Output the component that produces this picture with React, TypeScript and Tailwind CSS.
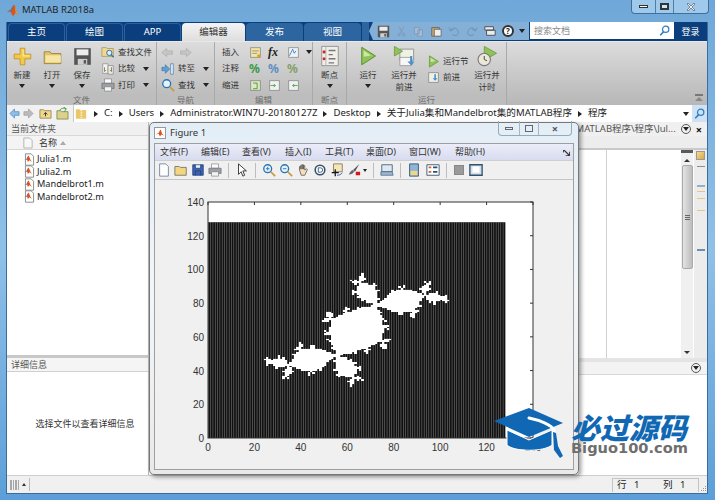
import { useMemo, type ReactNode } from 'react';

type IconProps = { className?: string };

const Svg = ({ children, className = 'w-4 h-4' }: { children: ReactNode; className?: string }) => (
  <svg viewBox="0 0 16 16" className={`${className} shrink-0`}>{children}</svg>
);

const Caret = () => <span className="inline-block w-0 h-0 border-x-[3.5px] border-x-transparent border-t-[4px] border-t-[#222]" />;
const Crumb = () => <span className="inline-block w-0 h-0 border-y-[3px] border-y-transparent border-l-[4px] border-l-[#222] mx-[6px]" />;

const MatlabLogo = ({ className }: IconProps) => (
  <Svg className={className}>
    <path d="M1 10l4-2 3-5 2-1 2 8 3 4-4-3-3 4-3-5z" fill="#d9541e" />
    <path d="M1 10l4-2 3-5 -1 6-3 0z" fill="#3f7fb5" />
    <path d="M10 2l2 8 3 4-4-3z" fill="#f0a020" />
  </Svg>
);

const MFile = () => (
  <Svg className="w-[13px] h-[13px]">
    <path d="M3 1h7l3 3v11H3z" fill="#fff" stroke="#777" />
    <path d="M1 9l3-1 2-4 1-1 2 5 2 3-3-2-2 2-1-3z" fill="#d9541e" />
    <path d="M1 9l3-1 2-4-1 4z" fill="#2f6fa8" />
  </Svg>
);

const Plus = () => (
  <Svg className="w-[19px] h-[19px]">
    <path d="M6 1h4v5h5v4h-5v5H6v-5H1V6h5z" fill="#f3c846" stroke="#b98a1c" strokeWidth=".6" />
    <path d="M7 2h2v5h5v1H8V2z" fill="#fbe89a" />
  </Svg>
);
const Folder = () => (
  <Svg className="w-[19px] h-[19px]">
    <path d="M1 4h5l1 1.5h8V14H1z" fill="#e2c468" stroke="#8a7130" strokeWidth=".6" />
    <path d="M2 7h13v6H2z" fill="#f5e6a6" />
  </Svg>
);
const Floppy = ({ className = 'w-[19px] h-[19px]' }: IconProps) => (
  <Svg className={className}>
    <path d="M1 1h14v14H1z" fill="#555" />
    <path d="M3 2h10v5H3z" fill="#ededed" />
    <path d="M4 10h8v5H4z" fill="#cfcfcf" />
    <path d="M9 11h2v3H9z" fill="#555" />
  </Svg>
);
const FindFile = () => (
  <Svg className="w-[14px] h-[14px]">
    <path d="M1 3h5l1 1h7v9H1z" fill="#f0d98f" stroke="#9a8240" strokeWidth=".7" />
    <circle cx="9.5" cy="9" r="3" fill="#dff0fb" stroke="#2a6fa8" strokeWidth="1.1" />
    <path d="M11.5 11l3 3" stroke="#2a6fa8" strokeWidth="1.5" />
  </Svg>
);
const Compare = () => (
  <Svg className="w-[14px] h-[14px]">
    <path d="M2 2h6v11H2z" fill="#f4f4f4" stroke="#888" strokeWidth=".8" />
    <path d="M8 4h6v10H8z" fill="#e8e8e8" stroke="#888" strokeWidth=".8" />
    <path d="M4 6v5l2-2M12 6v5l-2-2" stroke="#8a7a40" fill="none" />
  </Svg>
);
const Printer = ({ className = 'w-[14px] h-[14px]' }: IconProps) => (
  <Svg className={className}>
    <path d="M4 1h8v5H4z" fill="#fafafa" stroke="#777" strokeWidth=".7" />
    <path d="M1 6h14v6H1z" fill="#9aa0a6" stroke="#666" strokeWidth=".7" />
    <path d="M4 10h8v5H4z" fill="#f4f4f4" stroke="#777" strokeWidth=".7" />
  </Svg>
);
const GreyArrow = ({ flip }: { flip?: boolean }) => (
  <Svg className={`w-[13px] h-[13px] ${flip ? '-scale-x-100' : ''}`}>
    <path d="M1 8l6-5v3h7v4H7v3z" fill="#c6c6c6" stroke="#a5a5a5" strokeWidth=".7" />
  </Svg>
);
const GoTo = () => (
  <Svg className="w-[14px] h-[14px]">
    <path d="M1 8l5-5v3h4v4H6v3z" transform="rotate(180 5.5 8)" fill="#5f9fd6" stroke="#2d6da5" strokeWidth=".6" />
    <path d="M11 2h3v12h-3z" fill="#e8eef4" stroke="#2d6da5" strokeWidth=".7" />
  </Svg>
);
const Magnifier = ({ className = 'w-[14px] h-[14px]', mark }: IconProps & { mark?: string }) => (
  <Svg className={className}>
    <circle cx="6.5" cy="6.5" r="4.5" fill="#e3f1fb" stroke="#2a73ae" strokeWidth="1.5" />
    {mark && <path d={mark} stroke="#2a73ae" />}
    <path d="M10 10l5 5" stroke="#c99a3c" strokeWidth="2" />
  </Svg>
);
const Page = ({ children, tint = '#f1f1f1' }: { children?: ReactNode; tint?: string }) => (
  <Svg className="w-[13px] h-[13px]">
    <path d="M2 2h12v12H2z" fill={tint} stroke="#777" strokeWidth=".8" />
    {children}
  </Svg>
);
const Breakpoint = () => (
  <Svg className="w-[22px] h-[22px]">
    <path d="M2 1h12v14H2z" fill="#f1efea" stroke="#888" strokeWidth=".6" />
    <path d="M5 1v14" stroke="#aaa" strokeWidth=".6" />
    <circle cx="3.7" cy="5" r="1.1" fill="#d12a20" />
    <circle cx="3.7" cy="10" r="1.1" fill="#d12a20" />
    <path d="M7 4h5M7 7h3M7 10h5M7 13h4" stroke="#777" />
  </Svg>
);
const Play = ({ className = 'w-[20px] h-[20px]' }: IconProps) => (
  <Svg className={className}>
    <path d="M3 1l11 7-11 7z" fill="#8fc35a" stroke="#5f8f2c" strokeWidth=".8" />
    <path d="M4.5 3.5l6 4-6 1z" fill="#cde6a6" />
  </Svg>
);
const PlayAdvance = () => (
  <Svg className="w-[22px] h-[22px]">
    <path d="M5 3h10v8H5z" fill="#eef2e5" stroke="#777" strokeWidth=".5" />
    <path d="M1 1l6 3.5L1 8z" fill="#8fc35a" stroke="#5f8f2c" strokeWidth=".5" />
    <path d="M5 9h8v6H5z" fill="#f7f7f7" stroke="#888" strokeWidth=".5" />
    <path d="M12.5 8v4H10.5l3 3 2-3h-1.500V8z" fill="#4d8fcb" />
  </Svg>
);
const PlayTimer = () => (
  <Svg className="w-[22px] h-[22px]">
    <path d="M6 1l9 5-9 5z" fill="#8fc35a" stroke="#5f8f2c" strokeWidth=".5" />
    <circle cx="6" cy="10.500" r="4.500" fill="#ece8d8" stroke="#777" strokeWidth=".8" />
    <path d="M6 8v2.500l2 1" stroke="#444" fill="none" strokeWidth=".7" />
  </Svg>
);

const Big = ({ icon, label, arrow, className = '' }: { icon: ReactNode; label: ReactNode; arrow?: boolean; className?: string }) => (
  <div className={`flex flex-col items-center shrink-0 ${className}`}>
    <div className="h-[24px] flex items-center justify-center">{icon}</div>
    <div className="mt-[1px] text-center leading-[12px] text-[#333] whitespace-nowrap">{label}</div>
    {arrow && <div className="mt-[3px] leading-none flex"><Caret /></div>}
  </div>
);

const Small = ({ icon, label, arrow }: { icon: ReactNode; label: string; arrow?: boolean }) => (
  <div className="flex items-center h-[16.500px] gap-[3px] text-[#333] whitespace-nowrap">
    {icon}
    <span>{label}</span>
    {arrow && <span className="ml-[5px] flex"><Caret /></span>}
  </div>
);

const Section = ({ label, width, children }: { label: string; width: string; children: ReactNode }) => (
  <div className={`${width} shrink-0 flex flex-col border-r border-[#a9a9a9]`}>
    <div className="flex-1 flex pt-[2px] min-h-0">{children}</div>
    <div className="h-[11px] bg-[#bdbdbd] text-center text-[8.500px] leading-[11px] text-[#6d6d6d]">{label}</div>
  </div>
);

const Ribbon = () => (
  <div className="h-[64px] flex text-[8.500px] bg-gradient-to-b from-[#dcdcdc] to-[#b7b7b7] border-t border-[#e9e9e9]">
    <Section label="文件" width="w-[150px]">
      <Big className="w-[30px]" icon={<Plus />} label="新建" arrow />
      <Big className="w-[30px]" icon={<Folder />} label="打开" arrow />
      <Big className="w-[30px]" icon={<Floppy />} label="保存" arrow />
      <div className="flex flex-col ml-[4px]">
        <Small icon={<FindFile />} label="查找文件" />
        <Small icon={<Compare />} label="比较" arrow />
        <Small icon={<Printer />} label="打印" arrow />
      </div>
    </Section>
    <Section label="导航" width="w-[58px]">
      <div className="flex flex-col pl-[4px]">
        <div className="flex h-[16.500px] gap-[5px] items-center"><GreyArrow /><GreyArrow flip /></div>
        <Small icon={<GoTo />} label="转至" arrow />
        <Small icon={<Magnifier />} label="查找" arrow />
      </div>
    </Section>
    <Section label="编辑" width="w-[98px]">
      <div className="grid grid-cols-[27px_19px_19px_19px_10px] auto-rows-[16.500px] items-center pl-[7px]">
        <span className="text-[#333]">插入</span>
        <Page tint="#f5e4a4"><path d="M4 6h8M4 9h6" stroke="#887" /><circle cx="12" cy="12" r="2" fill="#e0a020" /></Page>
        <span className="font-['Liberation_Serif',serif] italic font-bold text-[12px] leading-none text-[#222]">fx</span>
        <Page tint="#eef3f8"><path d="M3 12l4-8 2 5 2-3" stroke="#3a74b0" fill="none" /></Page>
        <span className="flex"><Caret /></span>
        <span className="text-[#333]">注释</span>
        <span className="text-[12px] leading-none font-bold text-[#3c9a4a]">%</span>
        <span className="text-[12px] leading-none font-bold text-[#5f8fc0]">%</span>
        <span className="text-[12px] leading-none font-bold text-[#86a06a]">%</span>
        <span />
        <span className="text-[#333]">缩进</span>
        <Page tint="#dbe9c0"><path d="M5 5h5v7H5" stroke="#3c8a3a" fill="none" /></Page>
        <Page><path d="M3 8h6M7 6l2 2-2 2" stroke="#3c9a3a" fill="none" /></Page>
        <Page><path d="M13 8H7M9 6L7 8l2 2" stroke="#3c9a3a" fill="none" /></Page>
      </div>
    </Section>
    <Section label="断点" width="w-[34px]">
      <Big className="w-full" icon={<Breakpoint />} label="断点" arrow />
    </Section>
    <Section label="运行" width="w-[160px]">
      <Big className="w-[42px]" icon={<Play />} label="运行" arrow />
      <Big className="w-[30px]" icon={<PlayAdvance />} label={<>运行并<br />前进</>} />
      <div className="flex flex-col ml-[8px] pt-[9px] w-[48px]">
        <Small icon={<Play className="w-[13px] h-[13px]" />} label="运行节" />
        <Small icon={<Page tint="#eef0e6"><path d="M9 4v5H7l3 3 3-3h-2V4z" fill="#4d8fcb" /></Page>} label="前进" />
      </div>
      <Big className="w-[24px]" icon={<PlayTimer />} label={<>运行并<br />计时</>} />
    </Section>
    <div className="flex-1 flex flex-col items-end justify-end pr-[4px] pb-[4px]">
      <div className="w-[8px] border-t-2 border-[#777] mb-[1px]" />
      <div className="w-0 h-0 border-x-[4px] border-x-transparent border-b-[4px] border-b-[#888]" />
    </div>
  </div>
);

const Tab = ({ label, active }: { label: string; active?: boolean }) => (
  <div
    className={`rounded-t-[4px] flex items-center justify-center text-[9.500px] h-full ${active
      ? 'w-[63px] bg-gradient-to-b from-[#f4f4f4] to-[#dedede] text-[#333]'
      : 'w-[57px] mr-[1px] bg-[#0b3e7c] border-t border-x border-[#2c5f9c] text-white'}`}
  >
    {label}
  </div>
);

const DimTab = ({ label }: { label: string }) => (
  <div className="w-[57px] mr-[1px] h-full rounded-t-[4px] flex items-center justify-center text-[9.500px] text-white bg-[#2c659f]">{label}</div>
);

const SearchGlass = () => (
  <svg viewBox="0 0 14 14" className="w-[11px] h-[11px]"><circle cx="8.500" cy="5.500" r="4" fill="none" stroke="#2f7fc1" strokeWidth="1.600" /><path d="M6 8.500L1.500 13" stroke="#2f7fc1" strokeWidth="2" /></svg>
);

const TabStrip = () => (
  <div className="h-[19px] flex bg-[#0b3e7c] pl-[1px] pt-[1px] text-white">
    <Tab label="主页" />
    <Tab label="绘图" />
    <Tab label="APP" />
    <Tab label="编辑器" active />
    <div className="w-[1px]" />
    <DimTab label="发布" />
    <DimTab label="视图" />
    <div className="flex-1 bg-[#2c659f] -mt-[1px]" />
    <div className="w-[160px] -mt-[1px] h-[18px] bg-[#84afd6] flex items-center gap-[6px] pl-[8px] [clip-path:polygon(4px_0,100%_0,100%_100%,4px_100%,0_50%)]">
      <Floppy className="w-[13px] h-[13px]" />
      <svg viewBox="0 0 14 14" className="w-[11px] h-[11px]"><path d="M4 1l5 9M10 1L5 10" stroke="#7a97b5" fill="none" /><circle cx="4" cy="11" r="1.500" fill="none" stroke="#7a97b5" /><circle cx="10" cy="11" r="1.500" fill="none" stroke="#7a97b5" /></svg>
      <svg viewBox="0 0 14 14" className="w-[11px] h-[11px]"><path d="M2 2h6v8H2zM6 5h6v8H6z" fill="#a9bed4" stroke="#7a97b5" /></svg>
      <svg viewBox="0 0 14 14" className="w-[12px] h-[12px]"><path d="M2 3h9v10H2z" fill="#c9a56a" stroke="#666" /><path d="M5 5h8v8H5z" fill="#eee" stroke="#666" /></svg>
      <svg viewBox="0 0 14 14" className="w-[12px] h-[12px]"><path d="M3 6c2-4 8-3 9 2s-5 5-7 3M1 3l2 4 4-2" stroke="#6f8fae" fill="none" /></svg>
      <svg viewBox="0 0 14 14" className="w-[12px] h-[12px]"><path d="M11 6C9 2 3 3 2 8s5 5 7 3M13 3l-2 4-4-2" stroke="#6f8fae" fill="none" /></svg>
      <svg viewBox="0 0 14 14" className="w-[12px] h-[12px]"><path d="M1 2h10v4H1zM3 6h10v6H3z" fill="#e8edf2" stroke="#444" /></svg>
      <span className="w-[12px] h-[12px] rounded-full bg-white border-2 border-[#333] text-[8px] leading-[8px] text-center font-bold text-[#222]">?</span>
      <span className="flex -ml-[1px]"><Caret /></span>
    </div>
    <div className="w-[144px] -mt-[1px] ml-[1px] h-[17px] bg-white flex items-center justify-between pl-[4px] pr-[4px] text-[9px] text-[#8a8a8a]">
      <span>搜索文档</span>
      <SearchGlass />
    </div>
    <div className="w-[33px] -mt-[1px] flex items-center justify-center text-[9px]">登录</div>
  </div>
);

const AddressBar = () => (
  <div className="h-[17px] flex items-center bg-[#f1f1f1] text-[9.600px] text-[#222]">
    <svg viewBox="0 0 12 12" className="w-[11px] h-[11px] ml-[2px]"><path d="M1 6l5-5v3h5v4H6v3z" fill="#8cc0ea" stroke="#3f7fb8" strokeWidth=".7" /></svg>
    <svg viewBox="0 0 12 12" className="w-[11px] h-[11px] ml-[3px]"><path d="M11 6L6 1v3H1v4h5v3z" fill="#bcbcbc" stroke="#999" strokeWidth=".7" /></svg>
    <svg viewBox="0 0 14 14" className="w-[13px] h-[13px] ml-[5px]"><path d="M1 3h4l1 1h7v8H1z" fill="#f0d98f" stroke="#8a7640" strokeWidth=".8" /><path d="M7 10V6M5 8l2-2 2 2" stroke="#333" fill="none" /></svg>
    <svg viewBox="0 0 14 14" className="w-[13px] h-[13px] ml-[4px]"><path d="M1 4h4l1 1h7v8H1z" fill="#dcd18c" stroke="#6f8040" strokeWidth=".8" /><path d="M4 4c1-3 5-3 7-2M11 2L8 0M11 2L9 5" stroke="#3c9a3a" fill="none" /></svg>
    <div className="flex-1 h-full ml-[4px] bg-white flex items-center border-l border-[#c9c9c9] pl-[1px] whitespace-nowrap">
      <svg viewBox="0 0 14 14" className="w-[12px] h-[13px] mr-[1px]"><path d="M1 2h4l1 1h7v10H1z" fill="#edc765" /><path d="M7 3v10M8 3v10" stroke="#fff" strokeDasharray="1 1" /></svg>
      <Crumb />
      <span>C:</span><Crumb />
      <span>Users</span><Crumb />
      <span>Administrator.WIN7U-20180127Z</span><Crumb />
      <span>Desktop</span><Crumb />
      <span>关于Julia集和Mandelbrot集的MATLAB程序</span><Crumb />
      <span>程序</span>
      <span className="ml-auto flex mr-[3px]"><Caret /></span>
      <div className="w-[15px] h-full bg-[#cfe2f5] flex items-center justify-center"><SearchGlass /></div>
    </div>
  </div>
);

const files = ['Julia1.m', 'Julia2.m', 'Mandelbrot1.m', 'Mandelbrot2.m'];

const CircleDown = () => (
  <span className="w-[10px] h-[10px] rounded-full border border-[#555] flex items-center justify-center shrink-0">
    <Caret />
  </span>
);

const LeftColumn = () => (
  <div className="w-[142px] shrink-0 flex flex-col text-[9px] text-[#333] border-r border-[#bbb]">
    <div className="h-[14px] bg-[#f0f0f0] pl-[4px] leading-[14px] text-[#555] border-b border-[#d8d8d8]">当前文件夹</div>
    <div className="h-[14px] bg-[#f4f4f4] flex items-center border-b border-[#d5d5d5]">
      <svg viewBox="0 0 12 14" className="w-[10px] h-[12px] ml-[16px]"><path d="M1 1h7l3 3v9H1z" fill="#f7f7f7" stroke="#aaa" /></svg>
      <span className="ml-[6px] text-[#333]">名称</span>
      <span className="ml-[3px] w-0 h-0 border-x-[3px] border-x-transparent border-b-[4px] border-b-[#aaa]" />
    </div>
    <div className="h-[208px] bg-white pt-[3px] border-b-[3px] border-[#c8c8c8] text-[9.200px] text-[#222]">
      {files.map((f) => (
        <div key={f} className="h-[12.500px] flex items-center pl-[16px] gap-[1px]"><MFile /><span>{f}</span></div>
      ))}
    </div>
    <div className="h-[14px] bg-[#f5f5f5] pl-[4px] leading-[14px] text-[#555] border-b border-[#d0d0d0]">详细信息</div>
    <div className="flex-1 bg-white flex items-center justify-center pl-[15px] text-[#333]">选择文件以查看详细信息</div>
  </div>
);

const RightColumn = () => (
  <div className="flex-1 flex flex-col text-[9.500px] min-w-0">
    <div className="h-[14px] bg-[#f0f0f0] flex items-center justify-end gap-[5px] pr-[5px] text-[#555]">
      <span>MATLAB程序\程序\Jul...</span>
      <CircleDown />
      <span className="font-bold text-[#111] leading-none text-[11px]">×</span>
    </div>
    <div className="h-[14px] bg-[#ededed] border-b-2 border-[#c9c9c9]" />
    <div className="h-[208px] flex bg-white">
      <div className="flex-1 border-r border-[#d0d0d0] mr-[74px]" />
      <div className="w-[12px] flex flex-col items-center bg-[#f0f0f0]">
        <div className="w-full h-[3px] bg-[#5a5a5a]" />
        <div className="mt-[6px] w-0 h-0 border-x-[3px] border-x-transparent border-b-[3px] border-b-[#333]" />
        <div className="mt-[3px] w-[11px] h-[104px] rounded-[2px] border border-[#aaa] bg-gradient-to-r from-[#e3e3e3] to-[#bdbdbd] flex flex-col gap-[1px] items-center justify-center">
          <span className="w-[5px] border-t border-[#666]" /><span className="w-[5px] border-t border-[#666]" /><span className="w-[5px] border-t border-[#666]" />
        </div>
        <div className="mt-auto mb-[4px] w-0 h-0 border-x-[3px] border-x-transparent border-t-[3px] border-t-[#333]" />
      </div>
      <div className="w-[13px] ml-[1px] bg-[#ececec] flex flex-col items-center">
        <div className="w-[9px] h-[9px] mt-[1px] bg-gradient-to-br from-[#f6dc8e] to-[#d9a64a] border border-[#999]" />
        <span className="w-[8px] border-t border-[#8d8d8d] mt-[6px]" />
        <span className="w-[8px] border-t-2 border-[#97aec8] mt-[18px]" />
        <span className="w-[8px] border-t border-[#f0c37a] mt-[4px]" />
        <span className="w-[8px] border-t border-[#f0c37a] mt-[6px]" />
        <span className="w-[8px] border-t border-[#f0c37a] mt-[11px]" />
        <span className="w-[8px] border-t-2 border-[#6c8eb5] mt-[38px]" />
      </div>
    </div>
    <div className="h-[4px] bg-[#e4e4e4]" />
    <div className="h-[13px] bg-[#f3f3f3] flex items-center justify-end pr-[6px] border-b border-[#d8d8d8]"><CircleDown /></div>
    <div className="flex-1 bg-white" />
  </div>
);

const StatusBar = () => (
  <div className="h-[18px] bg-[#f0f0f0] border-t border-[#cfcfcf] flex items-center text-[9.500px] text-[#222]">
    <div className="flex gap-[1px] ml-[3px] h-[10px]">
      {[0, 1, 2, 3].map((i) => <span key={i} className="w-[1.500px] bg-[#a8a8a8]" />)}
    </div>
    <span className="ml-[3px] w-0 h-0 border-x-[2px] border-x-transparent border-b-[3px] border-b-[#333]" />
    <span className="ml-[3px] h-[13px] border-l border-[#bbb]" />
    <div className="ml-auto w-[87px] h-[14px] border-x border-t border-[#c4c4c4] flex items-center pl-[4px]">
      <span className="w-[46px]">行&nbsp;&nbsp;&nbsp;1</span>
      <span>列&nbsp;&nbsp;&nbsp;1</span>
    </div>
    <div className="w-[8px] h-full flex items-end justify-end">
      <svg viewBox="0 0 8 8" className="w-[8px] h-[8px]"><path d="M6 1h1v1H6zM4 3h1v1H4zM6 3h1v1H6zM2 5h1v1H2zM4 5h1v1H4zM6 5h1v1H6z" fill="#999" /></svg>
    </div>
  </div>
);

const FigIcon = ({ d, fill = '#f2d680', stroke = '#666' }: { d: string; fill?: string; stroke?: string }) => (
  <svg viewBox="0 0 16 16" className="w-[14px] h-[14px] shrink-0"><path d={d} fill={fill} stroke={stroke} strokeWidth=".9" /></svg>
);

const ToolSep = () => <span className="h-[15px] border-l border-[#bdbdbd] mx-[3px]" />;

const FigureToolbar = () => (
  <div className="h-[19px] bg-[#f0f0f0] border-b border-[#c5c5c5] flex items-center pl-[2px] gap-[3px]">
    <FigIcon d="M3 1h7l3 3v11H3z" fill="#fff" stroke="#5a7794" />
    <FigIcon d="M1 4h5l1 1h7v9H1z" />
    <FigIcon d="M2 2h12v12H2zM5 2v4h6V2M5 14V9h6v5" fill="#3d64b0" stroke="#20407f" />
    <Printer />
    <ToolSep />
    <FigIcon d="M4 1v12l3-3 2 5 2-1-2-5h4z" fill="#fff" stroke="#111" />
    <ToolSep />
    <Magnifier mark="M4.500 6.500h4M6.500 4.500v4" />
    <Magnifier mark="M4.500 6.500h4" />
    <FigIcon d="M4 8V4h1.500v3V2.500H7V7V2h1.500v5V3H10v5l2-1.500 1 1-3 6.500H6z" fill="#f7ddb8" stroke="#555" />
    <svg viewBox="0 0 16 16" className="w-[14px] h-[14px] shrink-0"><circle cx="8" cy="8" r="5.500" fill="#fff" stroke="#33506e" strokeWidth="1.800" /><path d="M6 5.500h2.500a2.500 2.500 0 010 5H6z" fill="none" stroke="#33506e" /></svg>
    <svg viewBox="0 0 16 16" className="w-[14px] h-[14px] shrink-0"><path d="M4 1h10v9H4z" fill="#f3e6bc" stroke="#8a7a50" /><path d="M6 7v8M2 11h8" stroke="#111" strokeWidth="1.400" /><path d="M8 14c3 0 5-1 6-3" stroke="#3050c0" fill="none" /></svg>
    <svg viewBox="0 0 16 16" className="w-[14px] h-[14px] shrink-0"><path d="M14 1L7 8l2 2z" fill="#555" /><path d="M7 8c-2 0-3 2-5 5 3 0 5-1 6-3z" fill="#667" /><path d="M10 10h5v4h-5z" fill="#d81818" /></svg>
    <span className="w-0 h-0 -ml-[1px] border-x-[2px] border-x-transparent border-t-[3px] border-t-[#222]" />
    <ToolSep />
    <svg viewBox="0 0 16 16" className="w-[14px] h-[14px] shrink-0"><path d="M2 2h12v8H2z" fill="#dfe8f2" stroke="#41617f" /><path d="M1 10h13l1 4H1z" fill="#9fb6cc" stroke="#41617f" strokeWidth=".8" /></svg>
    <ToolSep />
    <svg viewBox="0 0 16 16" className="w-[14px] h-[14px] shrink-0"><path d="M3 1h10v14H3z" fill="#8fb4dc" stroke="#2e5170" /><path d="M4 9h8v5H4z" fill="#f2d680" /></svg>
    <svg viewBox="0 0 16 16" className="w-[14px] h-[14px] ml-[2px] shrink-0"><path d="M1 2h14v12H1z" fill="#fff" stroke="#2e5170" /><path d="M3 5h3M3 10h3" stroke="#d8602a" strokeWidth="2" /><path d="M8 5h5M8 10h5" stroke="#2e5170" strokeWidth="2" /></svg>
    <ToolSep />
    <span className="w-[10px] h-[10px] ml-[1px] bg-[#9a9a9a] border border-[#888]" />
    <svg viewBox="0 0 16 16" className="w-[14px] h-[14px] ml-[2px] shrink-0"><path d="M1 2h14v12H1z" fill="#d8dee6" stroke="#2e5170" strokeWidth="1.500" /><path d="M4 4h8v7H4z" fill="#fff" /></svg>
  </div>
);

// Julia set of the reference: 128x128 grid over [-2,2], c = -0.123 - 0.745i
const useJuliaPath = () =>
  useMemo(() => {
    const n = 128;
    let d = '';
    for (let j = 0; j < n; j++) {
      for (let i = 0; i < n; i++) {
        let x = -2 + (4 * i) / (n - 1);
        let y = -2 + (4 * j) / (n - 1);
        let inside = true;
        for (let k = 0; k < 28; k++) {
          const nx = x * x - y * y - 0.123;
          y = 2 * x * y - 0.745;
          x = nx;
          if (x * x + y * y > 4) { inside = false; break; }
        }
        if (inside) d += `M${i} ${n - 1 - j}h1v1h-1z`;
      }
    }
    return d;
  }, []);

const plotLines = Array.from({ length: 129 }, (_, i) => i);

const Plot = () => {
  const julia = useJuliaPath();
  // axes box inside the figure canvas: page x 208-533, y 202-438
  const x0 = 53;
  const y0 = 22;
  const w = 325;
  const h = 236;
  const sx = w / 140;
  const sy = h / 140;
  const ticks = [0, 20, 40, 60, 80, 100, 120, 140];
  return (
    <svg viewBox="0 0 420 291" className="w-[420px] h-[291px] font-['Liberation_Sans',sans-serif]">
      <rect x={x0} y={y0} width={w} height={h} fill="#fff" />
      <g transform={`translate(${x0} ${y0 + h - 128 * sy}) scale(${sx} ${sy})`}>
        <rect width="128" height="128" fill="#111" />
        {plotLines.map((i) => (
          <rect key={i} x={i} width={0.24} height="128" fill="#7d7d7d" />
        ))}
        <path d={julia} fill="#fff" stroke="#fff" strokeWidth=".05" shapeRendering="crispEdges" />
      </g>
      <rect x={x0} y={y0} width={w} height={h} fill="none" stroke="#333" strokeWidth="1" />
      {ticks.map((t) => (
        <g key={t}>
          <text x={x0 - 4} y={y0 + h - t * sy + 4} textAnchor="end" fontSize="10" fill="#333">{t}</text>
          <text x={x0 + t * sx} y={y0 + h + 13} textAnchor="middle" fontSize="10" fill="#333">{t}</text>
          <path d={`M${x0 + t * sx} ${y0}v3M${x0 + w} ${y0 + h - t * sy}h-3`} stroke="#333" />
        </g>
      ))}
    </svg>
  );
};

const FigureWindow = () => (
  <div className="absolute left-[149px] top-[122px] w-[430px] h-[353px] rounded-[5px] border border-[#777] bg-gradient-to-b from-[#e4eef6] via-[#f2f6f9] to-[#e9e9e9] shadow-[2px_2px_4px_rgba(0,0,0,.4)] flex flex-col px-[4px] pb-[4px]">
    <div className="h-[20px] flex items-center shrink-0 text-[#333]">
      <svg viewBox="0 0 14 14" className="w-[12px] h-[12px] mr-[4px] bg-white border border-[#999]"><path d="M1 9l4-2 2-4 1-1 2 6 3 3-4-2-2 3-2-4z" fill="#d9541e" /></svg>
      <span className="text-[9.500px]">Figure 1</span>
      <div className="ml-auto -mt-[2px] mr-[2px] h-[15px] flex self-start border-x border-b border-[#97a8b8] rounded-b-[4px]">
        <div className="w-[21px] flex items-center justify-center border-r border-[#a8b6c4]"><span className="w-[8px] h-[3px] border border-[#667]" /></div>
        <div className="w-[19px] flex items-center justify-center border-r border-[#a8b6c4]"><span className="w-[8px] h-[7px] border border-[#667]" /></div>
        <div className="w-[32px] flex items-center justify-center text-[11px] text-[#556] font-bold leading-none">×</div>
      </div>
    </div>
    <div className="flex-1 flex flex-col border border-[#9f9f9f] bg-[#f0f0f0] min-h-0 text-[9px] text-[#333]">
      <div className="h-[17px] shrink-0 bg-gradient-to-b from-[#ebedf9] to-[#d9dcef] border-b border-[#cfcfcf] flex items-center pl-[5px]">
        <span className="w-[41px]">文件(F)</span>
        <span className="w-[41px]">编辑(E)</span>
        <span className="w-[43px]">查看(V)</span>
        <span className="w-[40px]">插入(I)</span>
        <span className="w-[41px]">工具(T)</span>
        <span className="w-[43px]">桌面(D)</span>
        <span className="w-[46px]">窗口(W)</span>
        <span>帮助(H)</span>
        <svg viewBox="0 0 8 8" className="ml-auto mr-[3px] w-[7px] h-[7px]"><path d="M0 1h2l5 5V3h1v5H3V7h3L1 2v2H0z" fill="#333" /></svg>
      </div>
      <FigureToolbar />
      <div className="flex-1 overflow-hidden bg-[#f0f0f0]"><Plot /></div>
    </div>
  </div>
);

const Watermark = () => (
  <div className="absolute left-[494px] top-[408px] flex items-start">
    <svg viewBox="0 0 72 52" className="w-[72px] h-[52px] shrink-0">
      <path d="M35 0L69 15 35 29 0 13z" fill="#1068b4" />
      <path d="M13 22L35 32 58 22V37C50 44 20 44 13 37z" fill="#1068b4" stroke="#fff" strokeWidth="1" />
      <path d="M35 10C45 12 58 17 60 22V32" stroke="#fff" strokeWidth="3" fill="none" strokeLinecap="round" />
      <path d="M59 24L62 25 64 38 69 48 66 50 60 42z" fill="#1068b4" />
    </svg>
    <div className="ml-[5px] mt-[3px] flex flex-col">
      <span className="text-[29px] leading-[30px] h-[30px] font-black italic text-[#1068b4] font-['Noto_Sans_CJK_SC',sans-serif] whitespace-nowrap">必过源码</span>
      <span className="text-[14.600px] leading-[14px] font-bold text-[#6e6e6e] font-['DejaVu_Sans',sans-serif] whitespace-nowrap">Biguo100.com</span>
    </div>
  </div>
);

export default function App() {
  return (
    <div className="relative w-[715px] h-[500px] overflow-hidden flex flex-col bg-gradient-to-b from-[#6fa8d8] via-[#8fc0e8] to-[#5c9fd8] font-['Noto_Sans','Noto_Sans_CJK_SC',sans-serif]">
      <div className="h-[22px] shrink-0 flex items-start pl-[6px] pt-[3px] text-[#222]">
        <MatlabLogo className="w-[14px] h-[14px]" />
        <span className="ml-[2px] text-[9.500px]">MATLAB R2018a</span>
        <div className="ml-auto mr-[6px] -mt-[3px] h-[14px] flex border-x border-b border-[#3f6f9f] rounded-b-[4px] bg-[#9fc9ea]">
          <div className="w-[24px] flex items-center justify-center border-r border-[#4f7fa8]"><span className="w-[9px] h-[3px] bg-white border border-[#333]" /></div>
          <div className="w-[18px] flex items-center justify-center border-r border-[#4f7fa8]"><span className="w-[9px] h-[7px] border-2 border-[#333] bg-[#cfe3f3]" /></div>
          <div className="w-[34px] flex items-center justify-center">
            <svg viewBox="0 0 10 10" className="w-[10px] h-[10px]"><path d="M1 2l1-1 3 3 3-3 1 1-3 3 3 3-1 1-3-3-3 3-1-1 3-3z" fill="#eef5fb" stroke="#445" strokeWidth=".6" /></svg>
          </div>
        </div>
      </div>
      <div className="flex-1 mx-[6px] mr-[7px] mb-[6px] flex flex-col min-h-0 border border-[#3c6c9c] border-t-0">
        <TabStrip />
        <Ribbon />
        <AddressBar />
        <div className="flex-1 flex min-h-0">
          <LeftColumn />
          <RightColumn />
        </div>
        <StatusBar />
      </div>
      <FigureWindow />
      <Watermark />
    </div>
  );
}
